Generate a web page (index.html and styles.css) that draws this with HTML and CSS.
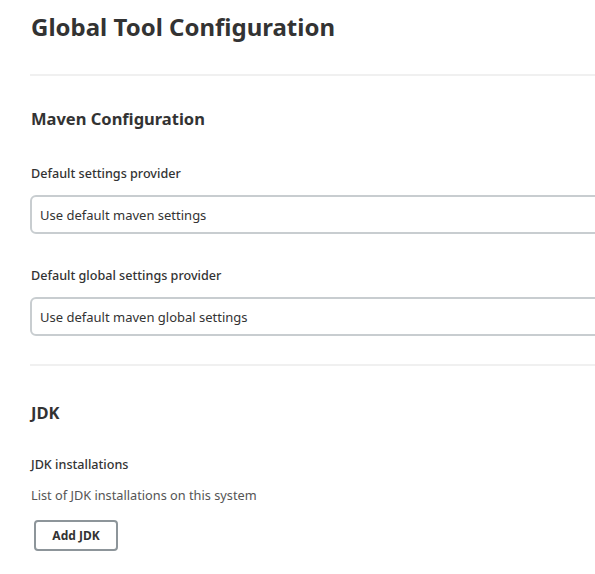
FILE: index.html
```html
<!DOCTYPE html>
<html>
<head>
<meta charset="utf-8">
<link rel="stylesheet" href="styles.css">
</head>
<body>
<div class="page">
  <h1 class="title">Global Tool Configuration</h1>
  <div class="divider"></div>
  <section class="section">
    <h2 class="section-title">Maven Configuration</h2>
    <div class="field">
      <div class="label">Default settings provider</div>
      <div class="select"><span>Use default maven settings</span></div>
    </div>
    <div class="field">
      <div class="label">Default global settings provider</div>
      <div class="select"><span>Use default maven global settings</span></div>
    </div>
  </section>
  <div class="divider divider-2"></div>
  <section class="section section-jdk">
    <h2 class="section-title">JDK</h2>
    <div class="field">
      <div class="label">JDK installations</div>
      <div class="help">List of JDK installations on this system</div>
      <button class="btn">Add JDK</button>
    </div>
  </section>
</div>
</body>
</html>
```
FILE: styles.css
```css
html, body {
  margin: 0;
  padding: 0;
  background: #fff;
  overflow: hidden;
}
body {
  font-family: "Noto Sans", "Open Sans", sans-serif;
  color: #333;
}
.page {
  padding: 0 0 0 30px;
  width: 600px;
}
.title {
  margin: 12px 0 0 1px;
  font-size: 24px;
  line-height: 30px;
  font-weight: 700;
  color: #333;
}
.divider {
  height: 2px;
  background: #f0f0f0;
  margin-top: 32px;
}
.section-title {
  margin: 31px 0 0 1px;
  font-size: 16.5px;
  line-height: 24px;
  font-weight: 700;
}
.section-jdk .section-title {
  margin-top: 35px;
}
.field {
  margin-top: 33px;
}
.field + .field {
  margin-top: 32px;
}
.section-jdk .field {
  margin-top: 30px;
}
.label {
  font-size: 12.6px;
  line-height: 20px;
  font-weight: 500;
  margin-left: 1px;
}
.select {
  margin-top: 11px;
  height: 35px;
  border: 2px solid #c8cdd0;
  border-radius: 6px;
  display: flex;
  align-items: center;
  padding-left: 8px;
  font-size: 13px;
}
.divider-2 {
  margin-top: 28px;
}
.help {
  margin-top: 10px;
  font-size: 12.75px;
  line-height: 20px;
  color: #555;
  margin-left: 1px;
}
.btn {
  display: block;
  margin: 15px 0 0 4px;
  width: 84px;
  height: 31px;
  border: 2px solid #8d959a;
  border-radius: 4px;
  background: #fff;
  font-family: inherit;
  font-size: 12px;
  font-weight: 700;
  color: #333;
  padding: 0;
}
```
